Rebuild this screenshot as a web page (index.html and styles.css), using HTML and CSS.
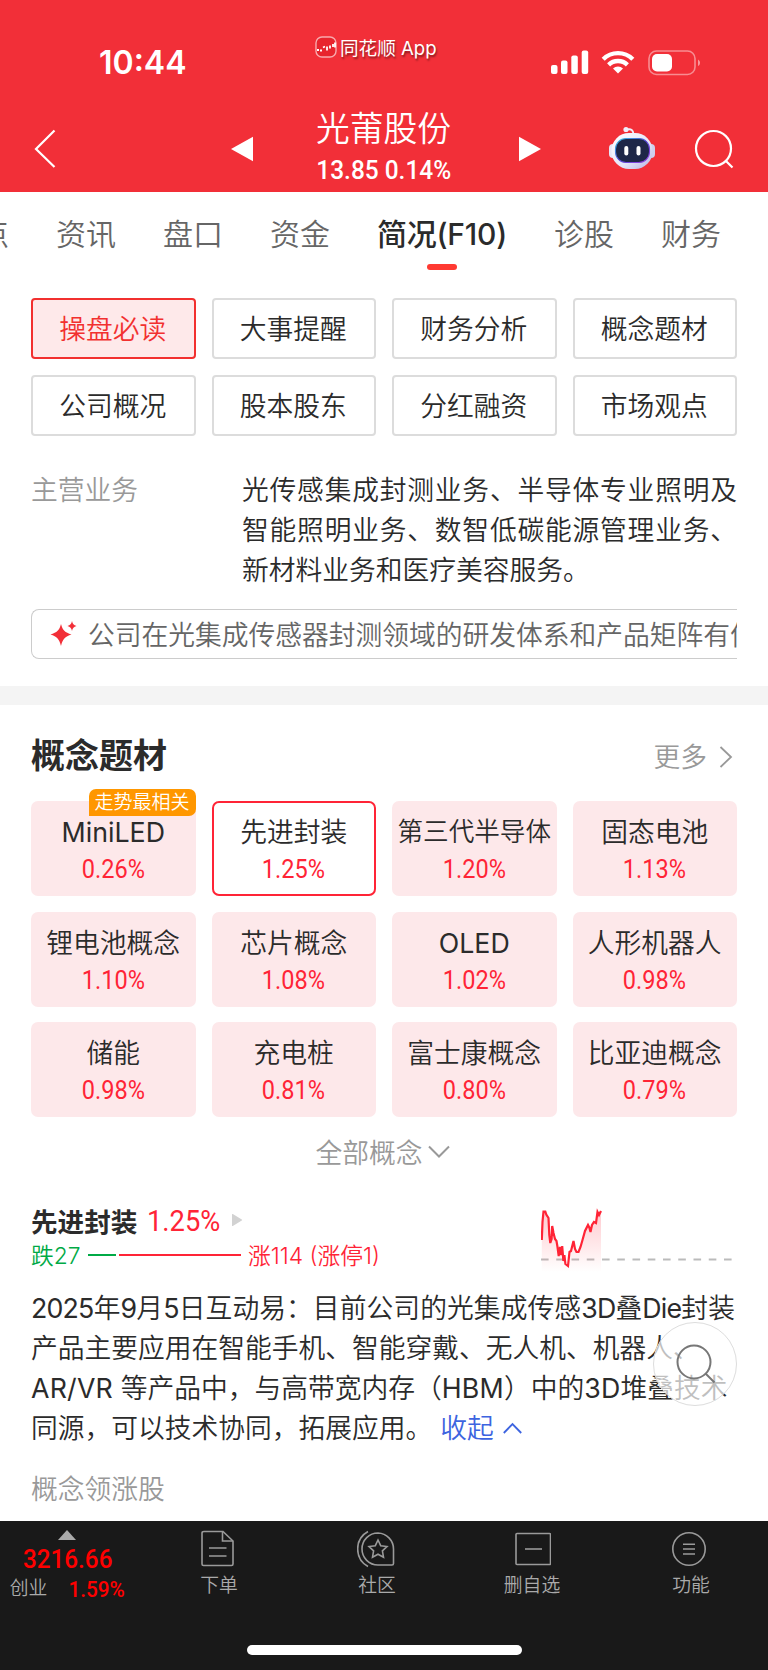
FILE: index.html
```html
<!DOCTYPE html>
<html lang="zh-CN">
<head>
    <meta charset="UTF-8">
    <meta name="viewport" content="width=device-width, initial-scale=1.0">
    <title>光莆股份</title>
    <link rel="stylesheet" href="styles.css">
</head>
<body>
    <header class="header">
        <div class="status-bar">
            <span class="time">10:44</span>
            <div class="app-label">
                <svg width="22" height="22" viewBox="0 0 22 22" fill="none">
                    <rect x="1" y="1" width="20" height="20" rx="6" fill="#e8242d" stroke="#fff" stroke-opacity=".6" stroke-width="1.4"/>
                    <path d="M2 14h2M5 14.500h2M8 11.500l2-1M12 10.500v4M15 9.500v3M18 8v3M20 6.500v5" stroke="#fff" stroke-width="1.8"/>
                </svg>
                <span>同花顺 App</span>
            </div>
            <div class="status-icons">
                <svg width="38" height="24" viewBox="0 0 38 24" fill="#fff">
                    <rect x="0" y="15" width="6.500" height="9" rx="2"/>
                    <rect x="10" y="10.500" width="6.500" height="13.500" rx="2"/>
                    <rect x="20.300" y="5.500" width="6.500" height="18.500" rx="2"/>
                    <rect x="30.700" y="0.500" width="6.500" height="23.500" rx="2"/>
                </svg>
                <svg class="wifi" width="34" height="24" viewBox="0 0 34 24" fill="none" stroke="#fff" stroke-width="4.400">
                    <path d="M2.200 9.200a21 21 0 0 1 29.600 0"/>
                    <path d="M7.600 14.800a13.500 13.500 0 0 1 18.800 0"/>
                    <path d="M17 23.500l-5-5a7.500 7.500 0 0 1 10 0z" fill="#fff" stroke="none"/>
                </svg>
                <svg width="54" height="26" viewBox="0 0 54 26">
                    <rect x="1" y="1" width="46" height="23.500" rx="7.500" fill="none" stroke="#fff" stroke-opacity=".45" stroke-width="1.600"/>
                    <path d="M50 9.500c2.700 1.400 2.700 5.200 0 6.600z" fill="#fff" fill-opacity=".5"/>
                    <rect x="4" y="4" width="20" height="17.500" rx="5" fill="#fff"/>
                </svg>
            </div>
        </div>
        <div class="nav-bar">
            <svg class="back" width="22" height="40" viewBox="0 0 22 40" fill="none" stroke="#fff" stroke-width="2.200">
                <path d="M20.500 1.500L2 20l18.500 18"/>
            </svg>
            <svg class="prev" width="22" height="26" viewBox="0 0 22 26" fill="#fff"><path d="M0 13L22 .8v24.400z"/></svg>
            <div class="stock">
                <h1>光莆股份</h1>
                <p class="num">13.85 0.14%</p>
            </div>
            <svg class="next" width="22" height="26" viewBox="0 0 22 26" fill="#fff"><path d="M22 13L0 .8v24.400z"/></svg>
            <svg class="robot" width="46" height="44" viewBox="0 0 46 44">
                <defs>
                    <linearGradient id="shell" x1="0" y1="0" x2="1" y2="1">
                        <stop offset="0" stop-color="#fff"/>
                        <stop offset=".6" stop-color="#e4e4f8"/>
                        <stop offset="1" stop-color="#b4b2e2"/>
                    </linearGradient>
                    <linearGradient id="rim" x1="0" y1="0" x2="1" y2="1">
                        <stop offset="0" stop-color="#35c4e0"/>
                        <stop offset=".5" stop-color="#5548d8"/>
                        <stop offset="1" stop-color="#9a3ee0"/>
                    </linearGradient>
                </defs>
                <path d="M18 3.500c4-1 6.500.5 6.500 5" fill="none" stroke="#f1eefb" stroke-width="2"/>
                <circle cx="17" cy="3.500" r="2.600" fill="#f1eefb"/>
                <rect x="0" y="18" width="8" height="14" rx="4" fill="#e6e5f6"/>
                <rect x="38" y="18" width="8" height="14" rx="4" fill="#cfcfee"/>
                <rect x="2.500" y="7" width="41" height="36" rx="17.500" fill="url(#shell)"/>
                <rect x="6.500" y="12.500" width="34" height="24" rx="10.500" fill="#1e2748" stroke="url(#rim)" stroke-width="1.100"/>
                <rect x="15.300" y="20" width="4" height="9.500" rx="2" fill="#fff"/>
                <rect x="27.500" y="20" width="4" height="9.500" rx="2" fill="#fff"/>
            </svg>
            <svg class="search" width="40" height="40" viewBox="0 0 40 40" fill="none" stroke="#fff" stroke-width="2.200">
                <circle cx="19.500" cy="19.500" r="17.500"/>
                <path d="M31.500 31.500l7 7"/>
            </svg>
        </div>
    </header>

    <nav class="tabs">
        <span>点</span>
        <span>资讯</span>
        <span>盘口</span>
        <span>资金</span>
        <span class="active">简况(F10)</span>
        <span>诊股</span>
        <span>财务</span>
    </nav>

    <section class="overview">
        <div class="menu-grid">
            <button class="selected">操盘必读</button>
            <button>大事提醒</button>
            <button>财务分析</button>
            <button>概念题材</button>
            <button>公司概况</button>
            <button>股本股东</button>
            <button>分红融资</button>
            <button>市场观点</button>
        </div>
        <div class="business">
            <span class="label">主营业务</span>
            <p>光传感集成封测业务、半导体专业照明及智能照明业务、数智低碳能源管理业务、新材料业务和医疗美容服务。</p>
        </div>
        <div class="ai-tip">
            <svg width="28" height="28" viewBox="0 0 28 28" fill="#f22f38">
                <path d="M11 4c1.500 6 4 8.500 10.500 10.500C15 16.500 12.500 19.500 11 26 9.500 19.500 7 16.500.5 14.500 7 12.500 9.500 10 11 4z"/>
                <path d="M22 1c.7 3 1.700 4 4.500 5-2.800 1-3.800 2-4.500 5-.7-3-1.700-4-4.500-5 2.800-1 3.800-2 4.500-5z"/>
            </svg>
            <span>公司在光集成传感器封测领域的研发体系和产品矩阵有优势</span>
        </div>
    </section>

    <section class="concepts">
        <div class="section-head">
            <h2>概念题材</h2>
            <span class="more">更多
                <svg width="14" height="24" viewBox="0 0 14 24" fill="none" stroke="#999" stroke-width="1.800"><path d="M1.500 2L12 12 1.500 22"/></svg>
            </span>
        </div>
        <div class="concept-grid">
            <div class="card"><i class="badge">走势最相关</i><b class="latin">MiniLED</b><span class="num">0.26%</span></div>
            <div class="card current"><b>先进封装</b><span class="num">1.25%</span></div>
            <div class="card"><b class="long">第三代半导体</b><span class="num">1.20%</span></div>
            <div class="card"><b>固态电池</b><span class="num">1.13%</span></div>
            <div class="card"><b>锂电池概念</b><span class="num">1.10%</span></div>
            <div class="card"><b>芯片概念</b><span class="num">1.08%</span></div>
            <div class="card"><b class="latin">OLED</b><span class="num">1.02%</span></div>
            <div class="card"><b>人形机器人</b><span class="num">0.98%</span></div>
            <div class="card"><b>储能</b><span class="num">0.98%</span></div>
            <div class="card"><b>充电桩</b><span class="num">0.81%</span></div>
            <div class="card"><b>富士康概念</b><span class="num">0.80%</span></div>
            <div class="card"><b>比亚迪概念</b><span class="num">0.79%</span></div>
        </div>
        <div class="all">全部概念
            <svg width="22" height="14" viewBox="0 0 22 14" fill="none" stroke="#999" stroke-width="2"><path d="M1 2.500l10 10 10-10"/></svg>
        </div>

        <div class="detail-head">
            <div>
                <div class="detail-name">
                    <h3>先进封装</h3>
                    <span class="num">1.25%</span>
                    <svg width="12" height="14" viewBox="0 0 12 14" fill="#d2d2d2"><path d="M1 1.500v11q0 .8.8.4L10.800 7.500q.8-.5 0-1L1.800 1q-.8-.3-.8.5z"/></svg>
                </div>
                <div class="updown">
                    <span class="down">跌27</span>
                    <i class="bar-down"></i>
                    <i class="bar-up"></i>
                    <span class="up">涨114 (涨停1)</span>
                </div>
            </div>
            <svg class="spark" width="194" height="64" viewBox="0 0 194 64" fill="none">
                <defs>
                    <linearGradient id="fade" x1="0" y1="0" x2="0" y2="1">
                        <stop offset="0" stop-color="#ff2436" stop-opacity=".24"/>
                        <stop offset="1" stop-color="#ff2436" stop-opacity="0"/>
                    </linearGradient>
                </defs>
                <path d="M0 51.500h194" stroke="#bbb" stroke-width="1.800" stroke-dasharray="7.600 7.650"/>
                <path d="M.8 32L1.500 14 2.500 3.500h1.800l1 3 2.200 3.500.8 17 1 8 1.300-4 .6-13 1.300 7 1.500 6 1.500 2 1 6 1.200 9 1.300-9 1.200 8 1-9 1.200 15 1-6 1 9L27 58l1.500-14 1.500-1 1.500-6 1-4 1.500 8 1.500 3h2l2-5 2-7 2.500-9 3-6 1.500 3 1 4 1.500-7 2-3 2 1 1.500-11 1.500 3 2-4V64H.8z" fill="url(#fade)"/>
                <path d="M.8 32L1.500 14 2.500 3.500h1.800l1 3 2.200 3.500.8 17 1 8 1.300-4 .6-13 1.300 7 1.500 6 1.500 2 1 6 1.200 9 1.300-9 1.200 8 1-9 1.200 15 1-6 1 9L27 58l1.500-14 1.500-1 1.500-6 1-4 1.500 8 1.500 3h2l2-5 2-7 2.500-9 3-6 1.500 3 1 4 1.500-7 2-3 2 1 1.500-11 1.500 3 2-4" stroke="#ff2436" stroke-width="2.200"/>
            </svg>
        </div>

        <p class="detail-text">
            <span class="full"><em>2025</em>年<em>9</em>月<em>5</em>日互动易：目前公司的光集成传感<em>3D</em>叠<em>Die</em>封装</span>
            <span>产品主要应用在智能手机、智能穿戴、无人机、机器人、</span>
            <span class="wide"><em>AR/VR </em>等产品中，与高带宽内存（<em>HBM</em>）中的<em>3D</em>堆叠技术</span>
            <span class="last">同源，可以技术协同，拓展应用。<a>收起<svg width="19" height="12" viewBox="0 0 19 12" fill="none" stroke="#3d64e0" stroke-width="1.800"><path d="M.8 11l8.700-9 8.700 9"/></svg></a></span>
        </p>
        <p class="leaders">概念领涨股</p>
        <div class="float-search">
            <svg width="44" height="44" viewBox="0 0 44 44" fill="none" stroke="#777" stroke-width="2">
                <circle cx="20" cy="20" r="16.500"/>
                <path d="M31.500 31.500l9 9"/>
            </svg>
        </div>
    </section>

    <footer class="bottom-bar">
        <div class="index">
            <svg width="18" height="10" viewBox="0 0 18 10" fill="#aaa"><path d="M9 0l9 10H0z"/></svg>
            <span class="num value">3216.66</span>
            <div class="index-row"><span>创业</span><span class="num">1.59%</span></div>
        </div>
        <div class="tool order">
            <svg width="38" height="38" viewBox="0 0 38 38" fill="none" stroke="#9a9a9a" stroke-width="1.600">
                <path d="M4 1.500h19L33 11V34q0 1.500-1.500 1.500h-28Q2 35.500 2 34V3Q2 1.500 4 1.500z"/>
                <path d="M22.500 2v9H33M9 18h17.500M9 26h17.500"/>
            </svg>
            <span>下单</span>
        </div>
        <div class="tool community">
            <svg width="40" height="38" viewBox="3.500 0 40 38" fill="none" stroke="#9a9a9a" stroke-width="1.600">
                <path d="M14.500 1.500A20 20 0 0 0 14.500 36.500"/>
                <path d="M24.500 3a16 16 0 0 0 0 32H38.500q1.500 0 1.500-1.500V19a16 16 0 0 0-15.500-16z"/>
                <path d="M24.500 10l2.700 5.700 6.300.8-4.600 4.400 1.100 6.300-5.500-3-5.500 3 1.100-6.300-4.600-4.400 6.300-.8z"/>
            </svg>
            <span>社区</span>
        </div>
        <div class="tool remove">
            <svg width="38" height="38" viewBox="-3 0 38 38" fill="none" stroke="#9a9a9a" stroke-width="1.600">
                <rect x="0" y="3.500" width="34.500" height="31" rx="1"/>
                <path d="M9 19h17"/>
            </svg>
            <span>删自选</span>
        </div>
        <div class="tool features">
            <svg width="38" height="38" viewBox="0 0 38 38" fill="none" stroke="#9a9a9a" stroke-width="1.600">
                <circle cx="17" cy="19" r="16.200"/>
                <path d="M11 14.200h12M11 19h12M11 24h12"/>
            </svg>
            <span>功能</span>
        </div>
        <i class="home-indicator"></i>
    </footer>
</body>
</html>
```
FILE: styles.css
```css
* {
    box-sizing: border-box;
    margin: 0;
    padding: 0;
}

body {
    width: 768px;
    height: 1670px;
    overflow: hidden;
    display: flex;
    flex-direction: column;
    font-family: Inter, "Noto Sans CJK SC", sans-serif;
    font-size: 26.75px;
    font-weight: 350;
    color: #2b2b2b;
    background: #fff;
}

svg {
    display: block;
    flex: none;
}

i, em {
    font-style: normal;
}

/* narrow figures for prices and percentages */
.num {
    display: inline-block;
    font-family: Roboto, sans-serif;
    font-weight: 400;
    transform: scaleX(.92);
}

/* header */
.header {
    height: 192px;
    color: #fff;
    background: #f22f38;
}

.status-bar {
    display: flex;
    height: 100px;
    padding-left: 99px;
}

.time {
    width: 216px;
    padding-top: 42px;
    font-size: 32px;
    font-weight: 600;
    line-height: 42px;
}

.app-label {
    display: flex;
    gap: 3px;
    width: 236px;
    padding-top: 36px;
    font-size: 18.6px;
    font-weight: 400;
    line-height: 25px;
    text-shadow: 1px 2px 2px rgba(0, 0, 0, .45);
}

.status-icons {
    display: flex;
    padding-top: 50px;
}

.wifi {
    margin: 0 13px 0 12px;
}

.nav-bar {
    display: flex;
    height: 92px;
}

.back {
    margin: 29px 0 0 34px;
}

.prev {
    margin: 36px 0 0 175px;
}

.stock {
    width: 266px;
    padding-right: 5px;
    text-align: center;
}

.stock h1 {
    margin-top: 8px;
    font-size: 33.8px;
    font-weight: 350;
    line-height: 42px;
}

.stock p {
    margin-top: 5px;
    font-size: 26px;
    font-weight: 500;
    line-height: 30px;
    white-space: nowrap;
    transform: scaleX(.94);
}

.next {
    margin-top: 36px;
}

.robot {
    margin: 26px 0 0 68px;
}

.search {
    margin: 29px 0 0 39px;
}

/* tabs */
.tabs {
    display: flex;
    gap: 47px;
    height: 106px;
    padding-top: 22px;
    margin-left: -21px;
    font-size: 30px;
    line-height: 40px;
    white-space: nowrap;
    color: #666;
}

.tabs .active {
    display: flex;
    flex-direction: column;
    align-items: center;
    width: 130px;
    font-weight: 500;
    letter-spacing: -.2px;
    color: #2b2b2b;
}

.tabs .active::after {
    content: "";
    width: 30px;
    height: 6px;
    margin-top: 10px;
    border-radius: 3px;
    background: #ff3a32;
}

/* overview */
.overview {
    height: 388px;
    padding: 0 31px;
}

.menu-grid {
    display: grid;
    grid-template-columns: repeat(4, 1fr);
    grid-auto-rows: 61px;
    gap: 16px;
}

.menu-grid button {
    padding: 0 1px 2px 0;
    font: inherit;
    color: inherit;
    background: #fff;
    border: 2px solid #dcdcdc;
    border-radius: 4px;
}

.menu-grid .selected {
    color: #f2302f;
    border-color: #f2302f;
    background: #fee9ea;
}

.business {
    display: flex;
    margin-top: 34px;
    line-height: 40px;
}

.business .label {
    width: 211px;
    color: #999;
}

.business p {
    width: 495px;
    text-align: justify;
}

.ai-tip {
    display: flex;
    align-items: center;
    gap: 10px;
    height: 50px;
    margin-top: 19px;
    padding: 0 0 1px 18px;
    overflow: hidden;
    white-space: nowrap;
    color: #666;
    border: 1px solid #ccc;
    border-right: none;
    border-radius: 8px 0 0 8px;
}

/* concepts */
.concepts {
    position: relative;
    height: 835px;
    padding: 0 31px;
    border-top: 19px solid #f4f4f4;
}

.section-head {
    display: flex;
    justify-content: space-between;
    height: 96px;
    padding-top: 30px;
    line-height: 42px;
}

.section-head h2 {
    font-size: 34px;
    font-weight: 700;
}

.more {
    display: flex;
    align-items: center;
    gap: 12px;
    height: 43px;
    padding-right: 4px;
    color: #999;
}

.concept-grid {
    display: grid;
    grid-template-columns: repeat(4, 1fr);
    grid-auto-rows: 95px;
    gap: 15.7px 16px;
}

.card {
    position: relative;
    display: flex;
    flex-direction: column;
    align-items: center;
    padding-top: 11px;
    border-radius: 7px;
    background: #fde8ea;
}

.card.current {
    padding-top: 9px;
    border: 2px solid #ff2436;
    background: #fff;
}

.card b {
    font-weight: 350;
    line-height: 40px;
    white-space: nowrap;
}

.card .long {
    font-size: 25.6px;
}

.card .latin {
    font-weight: 400;
}

.card .num {
    font-size: 25.6px;
    line-height: 34px;
    color: #ff2436;
}

.badge {
    position: absolute;
    top: -12px;
    right: 0;
    width: 107px;
    font-size: 19px;
    line-height: 27px;
    text-align: center;
    color: #fff;
    background: #ff9700;
    border-radius: 7px 7px 7px 0;
}

.all {
    display: flex;
    justify-content: center;
    align-items: center;
    gap: 5px;
    height: 40px;
    margin-top: 14px;
    padding-right: 3px;
    color: #999;
}

.detail-head {
    display: flex;
    justify-content: space-between;
    height: 87px;
    margin-top: 30px;
}

.detail-name {
    display: flex;
    align-items: center;
    height: 38px;
}

.detail-name h3 {
    font-size: 26.6px;
    font-weight: 700;
}

.detail-name .num {
    width: 80px;
    margin-left: 10px;
    padding-top: 2px;
    font-size: 29.4px;
    transform: scaleX(.93);
    color: #ff2436;
    transform-origin: left;
}

.detail-name svg {
    margin-left: 4px;
}

.updown {
    display: flex;
    align-items: center;
    height: 31px;
    font-size: 22.8px;
    white-space: nowrap;
}

.down {
    width: 57px;
    color: #00aa46;
}

.bar-down {
    width: 28px;
    height: 2px;
    background: #00aa46;
}

.bar-up {
    width: 122px;
    height: 2px;
    margin: 0 7px 0 3px;
    background: #ff2436;
}

.up {
    color: #ff2436;
}

.spark {
    margin: 7px 2px 0 0;
}

.detail-text span {
    display: block;
    height: 40px;
    line-height: 40px;
    white-space: nowrap;
}

.detail-text .full {
    margin-right: 2px;
    text-align-last: justify;
}

.detail-text em {
    letter-spacing: -.8px;
    font-weight: 400;
}

.detail-text .wide em {
    letter-spacing: .2px;
}

.detail-text .last {
    display: flex;
}

.detail-text a {
    display: flex;
    align-items: center;
    gap: 9px;
    margin-left: 8px;
    color: #3d64e0;
}

.leaders {
    margin-top: 21px;
    line-height: 40px;
    color: #999;
}

.float-search {
    position: absolute;
    left: 653px;
    top: 617px;
    width: 84px;
    height: 84px;
    padding: 19px 20px;
    border: 1px solid #ddd;
    border-radius: 50%;
    background: rgba(255, 255, 255, .7);
}

/* bottom bar */
.bottom-bar {
    position: relative;
    display: flex;
    height: 149px;
    font-size: 18.8px;
    color: #aaa;
    background: #191919;
}

.index {
    display: flex;
    flex-direction: column;
    align-items: center;
    width: 134px;
    padding-top: 9px;
}

.index .num {
    font-weight: 500;
    color: #f00;
}

.index .value {
    margin: 6px 0 0 2px;
    font-size: 26.4px;
    line-height: 26px;
}

.index-row {
    display: flex;
    align-items: center;
    gap: 19px;
    margin-top: 2px;
    padding-left: 3px;
    line-height: 30px;
}

.index-row .num {
    font-size: 22.5px;
}

.tool {
    display: flex;
    flex-direction: column;
    align-items: center;
    width: 160px;
    padding-top: 9px;
}

.tool span {
    margin-top: 4px;
    line-height: 28px;
}

.order {
    width: 170px;
}

.community {
    width: 146px;
}

.remove {
    width: 164px;
}

.features {
    width: 154px;
}

.home-indicator {
    position: absolute;
    left: 247px;
    bottom: 15px;
    width: 275px;
    height: 10px;
    border-radius: 5px;
    background: #fff;
}
```
